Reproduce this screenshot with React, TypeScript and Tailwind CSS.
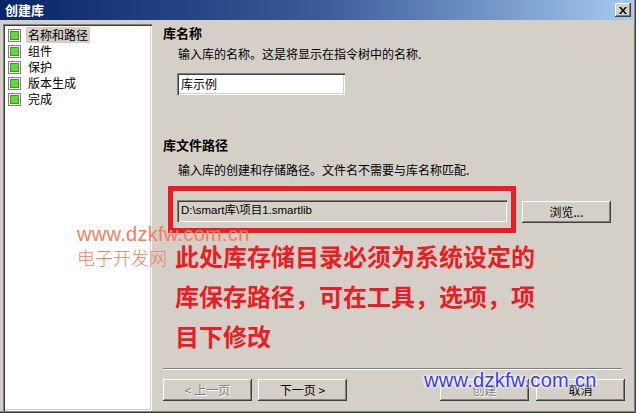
import React from "react";

const CJK = { fontFamily: '"Noto Sans CJK SC", "Liberation Sans", sans-serif' };
const LAT = { fontFamily: '"Liberation Sans", "Noto Sans CJK SC", sans-serif' };

function TreeIcon() {
  return (
    <div className="w-[13px] h-[13px] border border-[#808080] bg-white p-[1px] shrink-0">
      <div className="w-full h-full border border-[#3a9a1a] bg-[#66d63c]" />
    </div>
  );
}

function TreeItem({ label, selected }: { label: string; selected?: boolean }) {
  return (
    <div className="h-[16px] flex items-center pl-[3px]">
      <TreeIcon />
      <span
        className={
          "ml-[5px] h-[16px] px-[2px] leading-[16px] text-[12px] text-black " +
          (selected ? "bg-[#d4d0c8]" : "")
        }
      >
        {label}
      </span>
    </div>
  );
}

function Btn({ label, disabled, className }: { label: string; disabled?: boolean; className?: string }) {
  return (
    <div
      className={
        "h-[22px] w-[89px] bg-[#d4d0c8] flex items-center justify-center text-[12px] shadow-[inset_-1px_-1px_0_#404040,inset_1px_1px_0_#ffffff,inset_-2px_-2px_0_#808080] " +
        (disabled ? "text-[#808080] [text-shadow:1px_1px_0_#ffffff] " : "text-black ") +
        (className ?? "")
      }
    >
      {label}
    </div>
  );
}

export default function App() {
  return (
    <div
      className="relative w-[636px] h-[413px] bg-[#d4d0c8] overflow-hidden flex flex-col shadow-[inset_-1px_-1px_0_#404040,inset_-2px_-2px_0_#808080]"
      style={CJK}
    >
      {/* Title bar */}
      <div className="h-[20px] mr-[3px] bg-linear-to-r from-[#0a246a] via-[#3a5a98] to-[#a6caf0] flex items-center justify-between pl-[5px] pr-[2px] shrink-0">
        <span className="text-white font-bold text-[13px] leading-[16px]">创建库</span>
        <div className="w-[16px] h-[14px] bg-[#d4d0c8] flex items-center justify-center shadow-[inset_-1px_-1px_0_#404040,inset_1px_1px_0_#ffffff,inset_-2px_-2px_0_#808080]">
          <svg width="8" height="7" viewBox="0 0 8 7">
            <path d="M0 0h2l2 2.5L6 0h2L5 3.5L8 7H6L4 4.5L2 7H0l3-3.5z" fill="#000" />
          </svg>
        </div>
      </div>

      <div className="flex flex-row flex-1">
        {/* Tree */}
        <div className="ml-[3px] mt-[4px] w-[149px] h-[387px] bg-white pt-[3px] shadow-[inset_1px_1px_0_#808080,inset_2px_2px_0_#404040,inset_-1px_-1px_0_#ffffff,inset_-2px_-2px_0_#d4d0c8]">
          <div className="pl-[2px]">
            <TreeItem label="名称和路径" selected />
            <TreeItem label="组件" />
            <TreeItem label="保护" />
            <TreeItem label="版本生成" />
            <TreeItem label="完成" />
          </div>
        </div>

        {/* Right panel */}
        <div className="flex-1 flex flex-col pl-[11px] pr-[11px]">
          <div className="mt-[5px] h-[16px] leading-[16px] text-[13px] font-bold text-black">库名称</div>
          <div className="mt-[5px] ml-[15px] h-[16px] leading-[16px] text-[12px] text-black">
            输入库的名称。这是将显示在指令树中的名称.
          </div>
          <div className="mt-[11px] ml-[14px] w-[168px] h-[22px] bg-white flex items-center pl-[4px] text-[12px] text-black shadow-[inset_1px_1px_0_#808080,inset_2px_2px_0_#404040,inset_-1px_-1px_0_#ffffff,inset_-2px_-2px_0_#d4d0c8]">
            库示例
          </div>

          <div className="mt-[42px] h-[16px] leading-[16px] text-[13px] font-bold text-black">库文件路径</div>
          <div className="mt-[9px] ml-[15px] h-[16px] leading-[16px] text-[12px] text-black">
            输入库的创建和存储路径。文件名不需要与库名称匹配.
          </div>
          <div className="mt-[22px] ml-[14px] flex flex-row items-start">
            <div
              className="w-[330px] h-[22px] bg-[#d4d0c8] flex items-center pl-[4px] text-[11.5px] text-black shadow-[inset_1px_1px_0_#808080,inset_2px_2px_0_#404040,inset_-1px_-1px_0_#ffffff,inset_-2px_-2px_0_#d4d0c8]"
              style={LAT}
            >
              D:\smart库\项目1.smartlib
            </div>
            <Btn label="浏览..." className="ml-[15px] mt-[1px] w-[75px]" />
          </div>

          <div className="flex-1" />
          <div className="w-[459px] h-[2px] border-t border-[#808080] border-b border-b-white" />
          <div className="mt-[9px] mb-[12px] flex flex-row">
            <Btn label="< 上一页" disabled />
            <Btn label="下一页 >" className="ml-[6px]" />
            <Btn label="创建" disabled className="ml-[93px]" />
            <Btn label="取消" className="ml-[7px]" />
          </div>
        </div>
      </div>

      {/* Annotation overlays */}
      <div className="absolute left-[168px] top-[186px] w-[348px] h-[47px] border-[5px] border-[#ed1c24]" />
      <div
        className="absolute left-[77px] top-[224px] text-[20px] leading-[20px] text-[#f07f5f] tracking-[0.3px]"
        style={LAT}
      >
        www.dzkfw.com.cn
      </div>
      <div className="absolute left-[77px] top-[247px] text-[18px] leading-[20px] text-[#f07f5f] font-light">
        电子开发网
      </div>
      <div className="absolute left-[175px] top-[236px] w-[370px] text-[24px] leading-[40px] font-bold text-[#ed1c24]">
        <div>此处库存储目录必须为系统设定的</div>
        <div>库保存路径，可在工具，选项，项</div>
        <div>目下修改</div>
      </div>
      <div
        className="absolute left-[424px] top-[370px] text-[20px] leading-[20px] text-[#3b3bef] tracking-[0.3px] [text-shadow:0_0_2px_#ffffff,0_0_3px_#ffffff,0_0_4px_#ffffff]"
        style={LAT}
      >
        www.dzkfw.com.cn
      </div>
    </div>
  );
}
